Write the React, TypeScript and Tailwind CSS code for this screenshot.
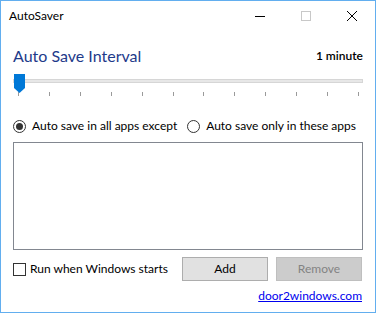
import React from "react";

const font = { fontFamily: '"Segoe UI", Lato, "Liberation Sans", sans-serif' };

function Thumb() {
  return (
    <svg width="11" height="19" viewBox="0 0 11 19" className="absolute left-0 top-[-6px]">
      <path d="M0 0 H11 V14 L5.5 19 L0 14 Z" fill="#0078d7" />
    </svg>
  );
}

function Radio({ checked }: { checked?: boolean }) {
  return (
    <span className="flex h-[13px] w-[13px] shrink-0 items-center justify-center rounded-full border border-[#333]">
      {checked && <span className="h-[7px] w-[7px] rounded-full bg-[#333]" />}
    </span>
  );
}

export default function App() {
  const ticks = Array.from({ length: 12 }, (_, i) => i);
  return (
    <div
      className="flex h-[313px] w-[376px] flex-col overflow-hidden border border-[#62aeef] bg-white text-[12px] leading-[16px] text-black"
      style={font}
    >
      <div className="flex h-[30px] shrink-0 items-center">
        <span className="pl-2 text-[12px]">AutoSaver</span>
        <div className="ml-auto flex h-full">
          <div className="flex w-[46px] items-center justify-center">
            <span className="h-px w-[10px] bg-black" />
          </div>
          <div className="flex w-[46px] items-center justify-center">
            <span className="h-[10px] w-[10px] border border-[#c8c8c8]" />
          </div>
          <div className="flex w-[46px] items-center justify-center">
            <svg width="10" height="10" viewBox="0 0 10 10">
              <path d="M0 0 L10 10 M10 0 L0 10" stroke="#000" strokeWidth="1" />
            </svg>
          </div>
        </div>
      </div>

      <div className="flex flex-1 flex-col px-3">
        <div className="mt-[14px] flex items-end justify-between">
          <span className="text-[16px] leading-[22px] text-[#1e3a8a]">Auto Save Interval</span>
          <span className="pb-[3px] font-semibold">1 minute</span>
        </div>

        <div className="relative mt-[12px] h-[4px] w-[350px] border border-[#d6d6d6] bg-[#e7e7e7]">
          <Thumb />
        </div>
        <div className="mt-[9px] flex justify-between pl-[5px] pr-[4px]">
          {ticks.map((t) => (
            <span key={t} className="h-[4px] w-px bg-[#9a9a9a]" />
          ))}
        </div>

        <div className="mt-[22px] flex items-center whitespace-nowrap">
          <Radio checked />
          <span className="ml-[6px]">Auto save in all apps except</span>
          <span className="ml-[10px]">
            <Radio />
          </span>
          <span className="ml-[6px]">Auto save only in these apps</span>
        </div>

        <div className="mt-[8px] h-[108px] w-[350px] shrink-0 border border-[#828790]" />

        <div className="mt-[7px] flex items-center whitespace-nowrap">
          <span className="h-[13px] w-[13px] border border-[#333]" />
          <span className="ml-[4px]">Run when Windows starts</span>
          <button className="ml-auto h-[24px] w-[86px] border border-[#adadad] bg-[#e1e1e1]">Add</button>
          <button className="ml-[8px] mr-[1px] h-[24px] w-[86px] border border-[#bfbfbf] bg-[#cccccc] text-[#838383]">
            Remove
          </button>
        </div>

        <div className="mt-[7px] flex justify-end pr-px">
          <a className="text-[#0000ee] underline">door2windows.com</a>
        </div>
      </div>
    </div>
  );
}
